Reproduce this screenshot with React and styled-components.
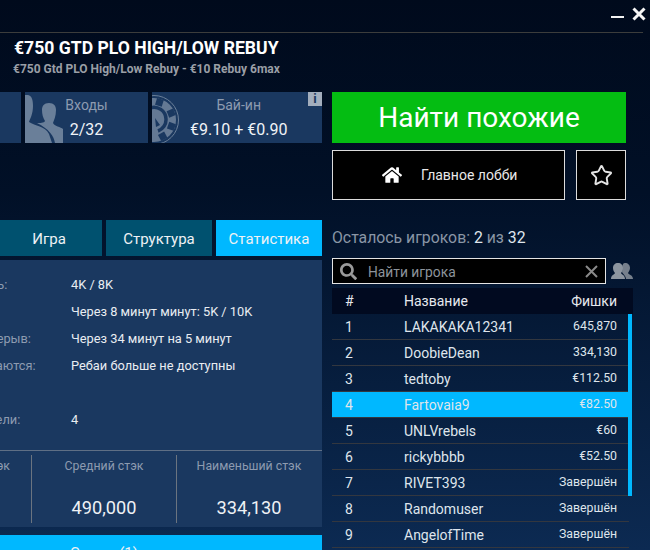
import React from 'react';
import styled, { createGlobalStyle } from 'styled-components';
import { FaHome, FaSearch } from 'react-icons/fa';
import { Star } from 'lucide-react';

const GlobalStyle = createGlobalStyle`
    html, body {
        margin: 0;
        padding: 0;
        background: #000a1c;
    }
    * {
        box-sizing: border-box;
    }
`
const Page = styled.div`
    position: relative;
    width: 650px;
    height: 550px;
    overflow: hidden;
    font-family: Roboto, "Noto Sans", sans-serif;
    color: #e6ebf2;
    background: linear-gradient(180deg, #000a1c 0%, #011027 35%, #0c2a52 100%);
`
const TitleBar = styled.div`
    height: 33px;
    width: 643px;
    padding: 0 0 11px;
    display: flex;
    justify-content: flex-end;
    align-items: flex-end;
    gap: 8px;
    border-bottom: 1px solid #3c3d3c;
`
const WindowIcon = styled.svg`
    display: block;
    width: 14px;
    height: 14px;
    margin-right: ${props => props.$shift || 0}px;
    margin-bottom: ${props => props.$lift || 0}px;
`
const Header = styled.div`
    height: 59px;
    padding: 5px 0 0 14px;
`
const Title = styled.div`
    font-size: 17.6px;
    line-height: 21px;
    font-weight: 700;
    color: #ffffff;
`
const Subtitle = styled.div`
    margin-top: 3px;
    margin-left: -1px;
    font-size: 12px;
    line-height: 14px;
    font-weight: 700;
    color: #9a9fa6;
`
const Main = styled.div`
    display: flex;
    margin-left: -114px;
    gap: 10px;
`
const LeftColumn = styled.div`
    width: 436px;
    flex-shrink: 0;
    display: flex;
    flex-direction: column;
`
const Cards = styled.div`
    display: flex;
    gap: 4px;
    height: 51px;
    margin-bottom: 77px;
`
const Card = styled.div`
    position: relative;
    width: ${props => props.$width}px;
    overflow: hidden;
    background: #1a3860;
    text-align: center;
    padding-top: 5px;
    padding-left: ${props => props.$inset || 0}px;
`
const CardLabel = styled.div`
    font-size: 14px;
    line-height: 16px;
    color: #8d9bb0;
`
const CardValue = styled.div`
    position: relative;
    margin-top: 8px;
    font-size: 16px;
    line-height: 18px;
    color: #f0f3f7;
`
const CardIcon = styled.svg`
    position: absolute;
    left: 0;
    top: 0;
    width: 52px;
    height: 51px;
`
const InfoBadge = styled.div`
    position: absolute;
    top: 0;
    right: 0;
    width: 14px;
    height: 14px;
    background: #a3aebd;
    color: #1a3860;
    font-size: 13px;
    line-height: 14px;
    font-weight: 700;
    text-align: center;
`
const Tabs = styled.div`
    display: flex;
    gap: 4px;
    height: 36px;
    margin-bottom: 4px;
`
const Tab = styled.div`
    width: 106px;
    display: flex;
    align-items: center;
    justify-content: center;
    padding-top: 2px;
    font-size: 15px;
    color: #eef2f5;
    background: ${props => (props.$active ? '#00b8ff' : '#00516f')};
`
const Panel = styled.div`
    height: 267px;
    background: #1a3860;
    display: flex;
    flex-direction: column;
`
const StatList = styled.div`
    height: 191px;
    padding: 11px 0 0 14px;
    border-bottom: 1px solid #5f6f85;
`
const StatRow = styled.div`
    display: flex;
    height: 27px;
    align-items: center;
    font-size: 12.8px;
`
const StatLabel = styled.div`
    width: 171px;
    flex-shrink: 0;
    color: #8d9bb0;
    white-space: nowrap;
`
const StatValue = styled.div`
    color: #e9edf2;
    white-space: nowrap;
`
const Stacks = styled.div`
    display: flex;
    padding-top: 4px;
`
const StackCol = styled.div`
    width: 145px;
    height: 68px;
    padding-top: 3px;
    text-align: center;
    border-left: ${props => (props.$first ? 'none' : '1.5px solid #6b7480')};
    display: flex;
    flex-direction: column;
    justify-content: space-between;
`
const StackLabel = styled.div`
    font-size: 12.3px;
    line-height: 16px;
    color: #8d9bb0;
`
const StackValue = styled.div`
    font-size: 18.2px;
    line-height: 20px;
    margin-bottom: 5px;
    color: #eef1f5;
`
const TablesBar = styled.div`
    height: 36px;
    margin-top: 8px;
    padding-top: 9px;
    background: #00b8ff;
    text-align: center;
    font-size: 15px;
    color: #eef2f5;
`
const RightColumn = styled.div`
    width: 301px;
    flex-shrink: 0;
`
const FindButton = styled.div`
    width: 294px;
    height: 51px;
    display: flex;
    align-items: center;
    justify-content: center;
    background: #04bd12;
    color: #ffffff;
    font-size: 28px;
`
const ButtonRow = styled.div`
    width: 294px;
    display: flex;
    justify-content: space-between;
    margin-top: 7px;
`
const LobbyButton = styled.div`
    width: 233px;
    height: 50px;
    display: flex;
    align-items: center;
    background: #000000;
    border: 1.5px solid #dcdcdc;
    padding-left: 49px;
    font-size: 14px;
    color: #e8e8e8;
    svg {
        font-size: 20px;
        color: #ffffff;
        margin-right: 19px;
    }
`
const StarButton = styled.div`
    width: 50px;
    height: 50px;
    display: flex;
    align-items: center;
    justify-content: center;
    background: #000000;
    border: 1.5px solid #dcdcdc;
    color: #e4e4e4;
`
const Remaining = styled.div`
    margin-top: 29px;
    height: 18px;
    font-size: 15.8px;
    line-height: 18px;
    color: #8a96a6;
    span {
        color: #dfe5ec;
    }
`
const SearchRow = styled.div`
    margin-top: 11px;
    display: flex;
    align-items: center;
    gap: 5px;
`
const SearchBox = styled.div`
    width: 274px;
    height: 26px;
    display: flex;
    align-items: center;
    background: #000000;
    border: 1.5px solid #e4e4e4;
    padding: 0 7px;
    font-size: 13.8px;
    color: #8d949c;
`
const SearchIcon = styled(FaSearch)`
    font-size: 17px;
    color: #9a9a9a;
    margin-right: 11px;
`
const SearchText = styled.div`
    flex: 1;
    padding-top: 1px;
`
const ClearIcon = styled.svg`
    width: 13px;
    height: 13px;
`
const PeopleIcon = styled.svg`
    width: 22px;
    height: 16px;
`
const PlayerTable = styled.div`
    position: relative;
    margin-top: 4px;
`
const TableHead = styled.div`
    display: grid;
    grid-template-columns: 59px 1fr auto;
    align-items: center;
    height: 26px;
    padding: 0 16px 0 13px;
    background: #010a20;
    font-size: 14px;
    color: #e6e9ee;
`
const Row = styled.div`
    display: grid;
    grid-template-columns: 59px 1fr auto;
    align-items: center;
    width: 297px;
    height: 26px;
    padding: 0 12px 0 13px;
    font-size: 14px;
    color: #dfe5ec;
    border-bottom: 1px solid #33373f;
    background: ${props => (props.$active ? '#00b8ff' : 'transparent')};
`
const Chips = styled.div`
    font-size: 12.3px;
    padding-bottom: 2px;
`
const ScrollThumb = styled.div`
    position: absolute;
    top: 26px;
    left: 296px;
    width: 4px;
    height: 182px;
    background: #00b8ff;
`

const players = [
    ['1', 'LAKAKAKA12341', '645,870'],
    ['2', 'DoobieDean', '334,130'],
    ['3', 'tedtoby', '€112.50'],
    ['4', 'Fartovaia9', '€82.50'],
    ['5', 'UNLVrebels', '€60'],
    ['6', 'rickybbbb', '€52.50'],
    ['7', 'RIVET393', 'Завершён'],
    ['8', 'Randomuser', 'Завершён'],
    ['9', 'AngelofTime', 'Завершён'],
]

const stats = [
    ['Текущий уровень:', '4K / 8K'],
    ['Следующий:', 'Через 8 минут минут: 5K / 10K'],
    ['Следующий перерыв:', 'Через 34 минут на 5 минут'],
    ['Ребаи заканчиваются:', 'Ребаи больше не доступны'],
    ['', ''],
    ['Сейчас победители:', '4'],
]

const chipNotches = [-73, -22, 20, 62]

const App = () => {
    return (
        <Page>
            <GlobalStyle />
            <TitleBar>
                <WindowIcon viewBox="0 0 14 14" $lift={1}>
                    <rect x="1" y="10" width="13" height="2" fill="#f2f2f2" />
                </WindowIcon>
                <WindowIcon viewBox="0 0 14 14" $shift={-3}>
                    <path d="M1.5 1.5 L12.5 12.5 M12.5 1.5 L1.5 12.5" stroke="#f6f6f6" strokeWidth="3" />
                </WindowIcon>
            </TitleBar>
            <Header>
                <Title>€750 GTD PLO HIGH/LOW REBUY</Title>
                <Subtitle>€750 Gtd PLO High/Low Rebuy - €10 Rebuy 6max</Subtitle>
            </Header>
            <Main>
                <LeftColumn>
                    <Cards>
                        <Card $width={135} />
                        <Card $width={124}>
                            <CardIcon viewBox="0 0 52 51">
                                <path d="M0 3 H3 C7 4 8 8 8 14 C8 22 5 27 4 30 C10 34 20 34 24 42 L27 51 H0 Z" fill="#6a7f99" />
                                <path d="M24 11 C29 11 31 14 31 18 C31 24 29 28 28 31 C29 34 36 35 38 37 V51 H30 C29 44 24 37 12 31 C15 31 19 31 20 29 C18 26 17 22 17 18 C17 14 19 11 24 11 Z" fill="#6a7f99" />
                            </CardIcon>
                            <CardLabel>Входы</CardLabel>
                            <CardValue>2/32</CardValue>
                        </Card>
                        <Card $width={170} $inset={3}>
                            <CardIcon viewBox="0 0 52 51">
                                <circle cx="2" cy="28" r="24.5" fill="none" stroke="#6a7f99" strokeWidth="1" />
                                <circle cx="2" cy="28" r="22" fill="#647994" />
                                {chipNotches.map(angle => (
                                    <rect key={angle} x="15" y="-3.5" width="7" height="7" fill="#1a3860" transform={`translate(2 28) rotate(${angle})`} />
                                ))}
                                <path d="M-2 16 A12 12 0 0 1 14 27 A12 12 0 0 1 6 39" fill="none" stroke="#1a3860" strokeWidth="3.5" />
                                <path d="M3 26 L8 33 L4 35 Z" fill="#1a3860" />
                            </CardIcon>
                            <CardLabel>Бай-ин</CardLabel>
                            <CardValue>€9.10 + €0.90</CardValue>
                            <InfoBadge>i</InfoBadge>
                        </Card>
                    </Cards>
                    <Tabs>
                        <Tab>Турнир</Tab>
                        <Tab>Игра</Tab>
                        <Tab>Структура</Tab>
                        <Tab $active>Статистика</Tab>
                    </Tabs>
                    <Panel>
                        <StatList>
                            {stats.map((stat, i) => (
                                <StatRow key={i}>
                                    <StatLabel>{stat[0]}</StatLabel>
                                    <StatValue>{stat[1]}</StatValue>
                                </StatRow>
                            ))}
                        </StatList>
                        <Stacks>
                            <StackCol $first>
                                <StackLabel>Наибольший стэк</StackLabel>
                                <StackValue>645,870</StackValue>
                            </StackCol>
                            <StackCol>
                                <StackLabel>Средний стэк</StackLabel>
                                <StackValue>490,000</StackValue>
                            </StackCol>
                            <StackCol>
                                <StackLabel>Наименьший стэк</StackLabel>
                                <StackValue>334,130</StackValue>
                            </StackCol>
                        </Stacks>
                    </Panel>
                    <TablesBar>Столы (1)</TablesBar>
                </LeftColumn>
                <RightColumn>
                    <FindButton>Найти похожие</FindButton>
                    <ButtonRow>
                        <LobbyButton><FaHome />Главное лобби</LobbyButton>
                        <StarButton><Star size={23} strokeWidth={2} /></StarButton>
                    </ButtonRow>
                    <Remaining>Осталось игроков: <span>2</span> из <span>32</span></Remaining>
                    <SearchRow>
                        <SearchBox>
                            <SearchIcon />
                            <SearchText>Найти игрока</SearchText>
                            <ClearIcon viewBox="0 0 13 13">
                                <path d="M1 1 L12 12 M12 1 L1 12" stroke="#8a8a8a" strokeWidth="2" />
                            </ClearIcon>
                        </SearchBox>
                        <PeopleIcon viewBox="0 0 22 16">
                            <path d="M14 0 C17 0 19 2 19 5 C19 7 18 8 17 10 C18 12 22 12 22 16 H15 C15 13 12 11 11 9 C12 7 10 0 14 0 Z" fill="#77808c" />
                            <path d="M7 0 C10 0 12 2 12 5 C12 7 11 9 10 10 C11 12 14 12 14 16 H0 C0 12 3 12 4 10 C3 9 2 7 2 5 C2 2 4 0 7 0 Z" fill="#8d959f" />
                        </PeopleIcon>
                    </SearchRow>
                    <PlayerTable>
                        <TableHead>
                            <div>#</div>
                            <div>Название</div>
                            <div>Фишки</div>
                        </TableHead>
                        {players.map(player => (
                            <Row key={player[0]} $active={player[0] === '4'}>
                                <div>{player[0]}</div>
                                <div>{player[1]}</div>
                                <Chips>{player[2]}</Chips>
                            </Row>
                        ))}
                        <ScrollThumb />
                    </PlayerTable>
                </RightColumn>
            </Main>
        </Page>
    )
}

export default App;
